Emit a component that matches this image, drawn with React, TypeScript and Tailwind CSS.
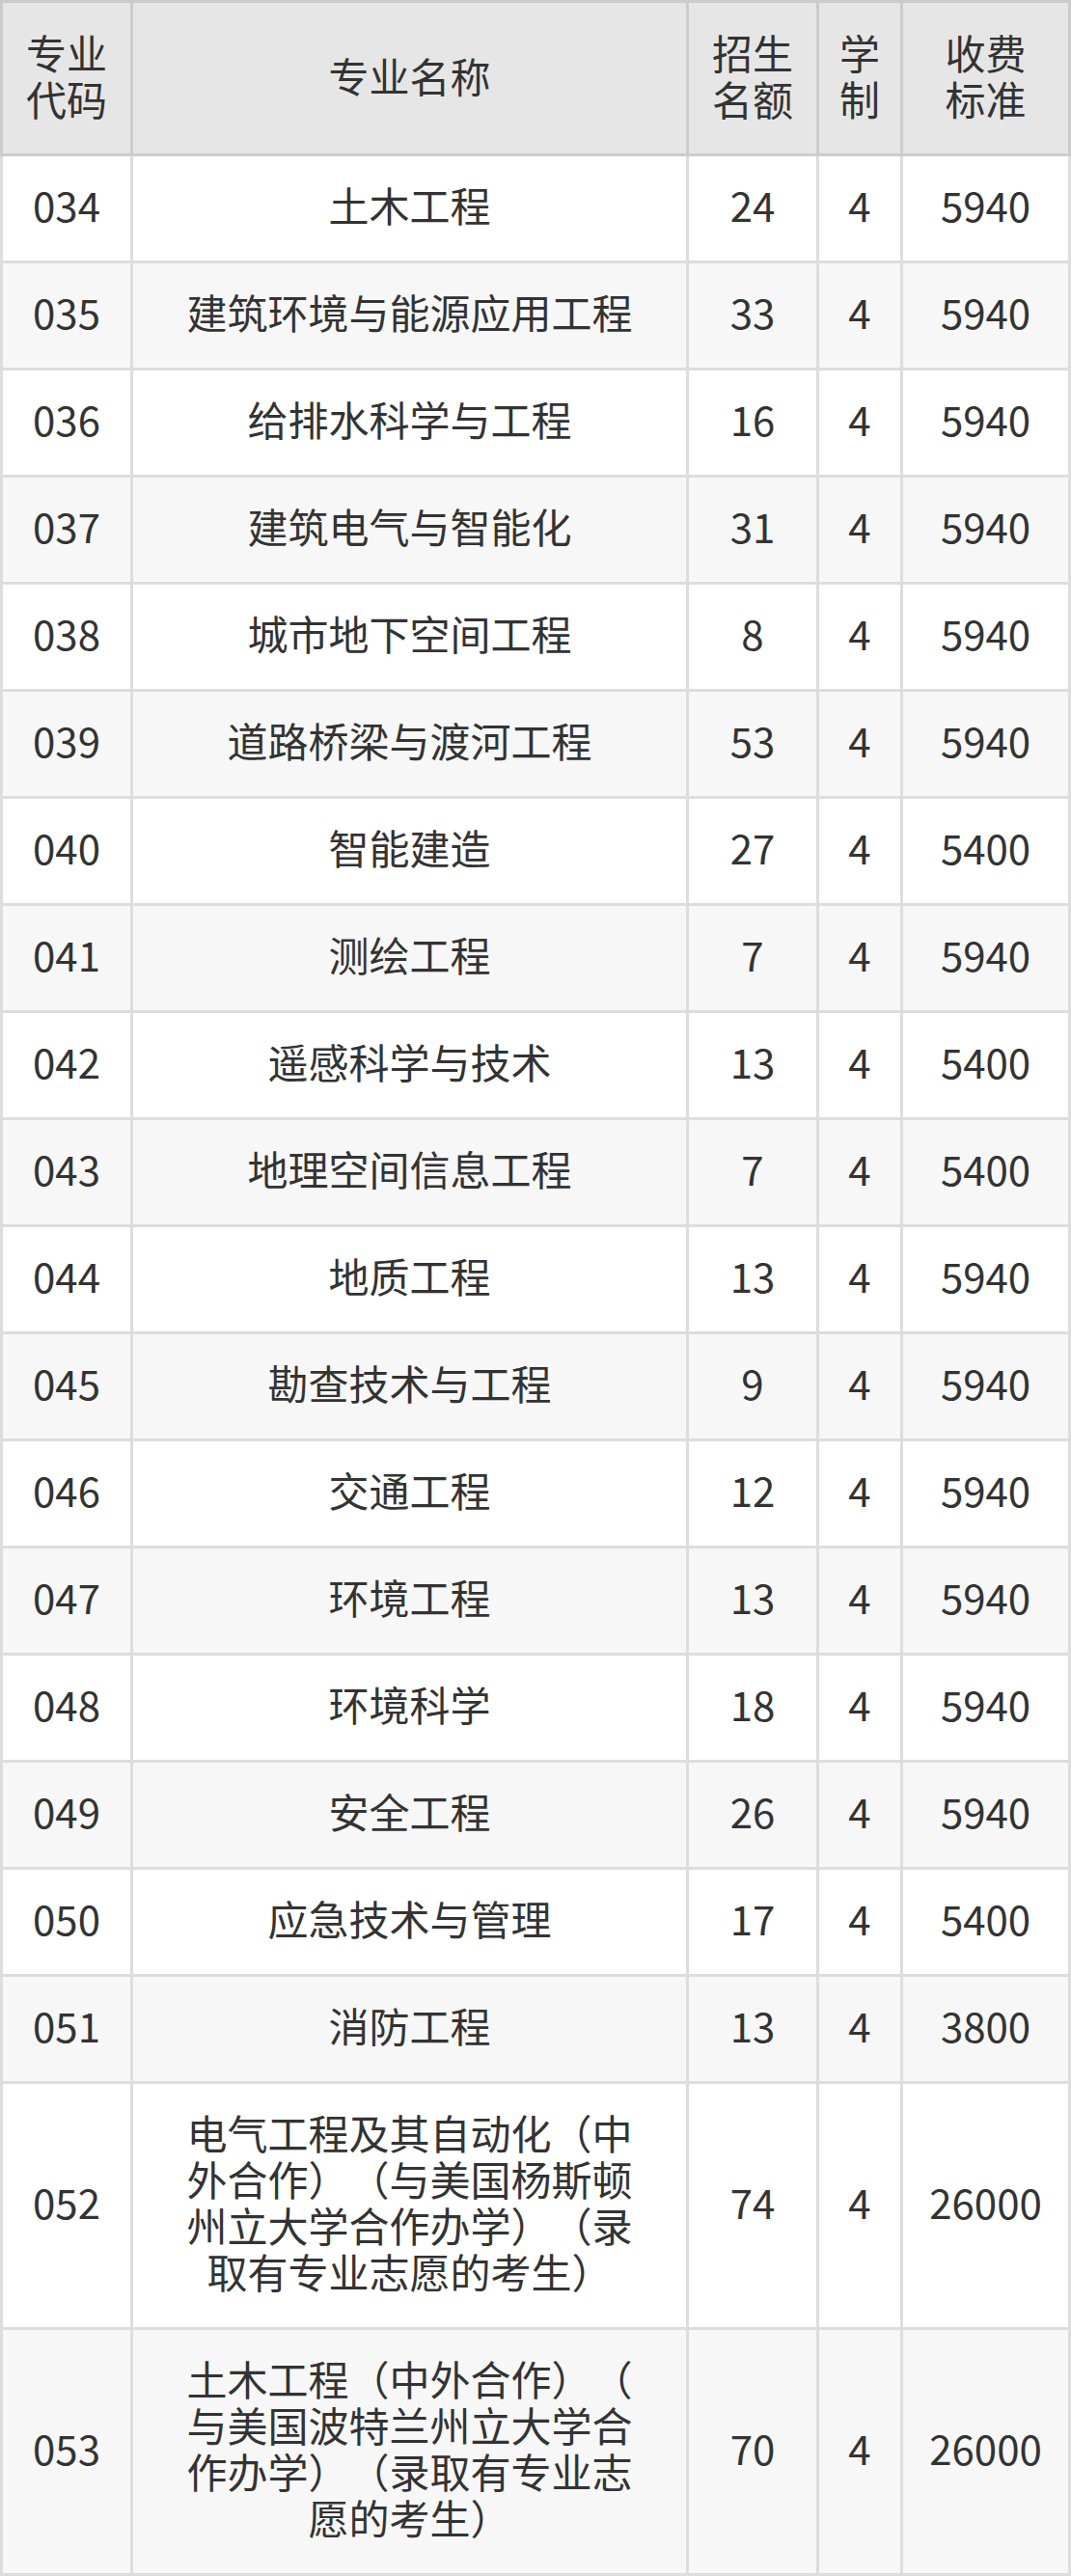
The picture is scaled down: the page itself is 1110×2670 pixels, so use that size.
import React from 'react'

type Row = {
    code: string
    name: string[]
    quota: string
    years: string
    fee: string
}

const rows: Row[] = [
    { code: '034', name: ['土木工程'], quota: '24', years: '4', fee: '5940' },
    { code: '035', name: ['建筑环境与能源应用工程'], quota: '33', years: '4', fee: '5940' },
    { code: '036', name: ['给排水科学与工程'], quota: '16', years: '4', fee: '5940' },
    { code: '037', name: ['建筑电气与智能化'], quota: '31', years: '4', fee: '5940' },
    { code: '038', name: ['城市地下空间工程'], quota: '8', years: '4', fee: '5940' },
    { code: '039', name: ['道路桥梁与渡河工程'], quota: '53', years: '4', fee: '5940' },
    { code: '040', name: ['智能建造'], quota: '27', years: '4', fee: '5400' },
    { code: '041', name: ['测绘工程'], quota: '7', years: '4', fee: '5940' },
    { code: '042', name: ['遥感科学与技术'], quota: '13', years: '4', fee: '5400' },
    { code: '043', name: ['地理空间信息工程'], quota: '7', years: '4', fee: '5400' },
    { code: '044', name: ['地质工程'], quota: '13', years: '4', fee: '5940' },
    { code: '045', name: ['勘查技术与工程'], quota: '9', years: '4', fee: '5940' },
    { code: '046', name: ['交通工程'], quota: '12', years: '4', fee: '5940' },
    { code: '047', name: ['环境工程'], quota: '13', years: '4', fee: '5940' },
    { code: '048', name: ['环境科学'], quota: '18', years: '4', fee: '5940' },
    { code: '049', name: ['安全工程'], quota: '26', years: '4', fee: '5940' },
    { code: '050', name: ['应急技术与管理'], quota: '17', years: '4', fee: '5400' },
    { code: '051', name: ['消防工程'], quota: '13', years: '4', fee: '3800' },
    {
        code: '052',
        name: ['电气工程及其自动化（中', '外合作）（与美国杨斯顿', '州立大学合作办学）（录', '取有专业志愿的考生）'],
        quota: '74',
        years: '4',
        fee: '26000'
    },
    {
        code: '053',
        name: ['土木工程（中外合作）（', '与美国波特兰州立大学合', '作办学）（录取有专业志', '愿的考生）'],
        quota: '70',
        years: '4',
        fee: '26000'
    }
]

const headers = [['专业', '代码'], ['专业名称'], ['招生', '名额'], ['学', '制'], ['收费', '标准']]

const cols = 'grid grid-cols-[132px_573px_132px_84px_171px] gap-[3px]'

function Lines({ lines }: { lines: string[] }) {
    return (
        <>
            {lines.map((l, i) => (
                <span key={i} className="block whitespace-nowrap">{l}</span>
            ))}
        </>
    )
}

export default function App() {
    return (
        <div
            className="w-[1110px] text-[42px] leading-[48px] text-[#333333] [text-spacing-trim:space-all]"
            style={{ fontFamily: '"Noto Sans CJK SC", "Noto Sans", sans-serif' }}
        >
            {/* header */}
            <div className={`${cols} bg-[#cccccc] p-[3px]`}>
                {headers.map((h, i) => (
                    <div key={i} className="flex items-center justify-center bg-[#e6e6e6] pt-[27px] pb-[33px] text-center">
                        <div>
                            <Lines lines={h} />
                        </div>
                    </div>
                ))}
            </div>

            {/* body */}
            <div className={`${cols} bg-[#dddddd] px-[3px] pb-[3px]`}>
                {rows.map((r, idx) => {
                    const bg = idx % 2 === 0 ? 'bg-white' : 'bg-[#f7f7f7]'
                    const cell = `flex items-center justify-center pt-[26px] pb-[34px] text-center ${bg}`
                    return (
                        <React.Fragment key={r.code}>
                            <div className={cell}>{r.code}</div>
                            <div className={cell}>
                                <div>
                                    <Lines lines={r.name} />
                                </div>
                            </div>
                            <div className={cell}>{r.quota}</div>
                            <div className={cell}>{r.years}</div>
                            <div className={cell}>{r.fee}</div>
                        </React.Fragment>
                    )
                })}
            </div>
        </div>
    )
}
